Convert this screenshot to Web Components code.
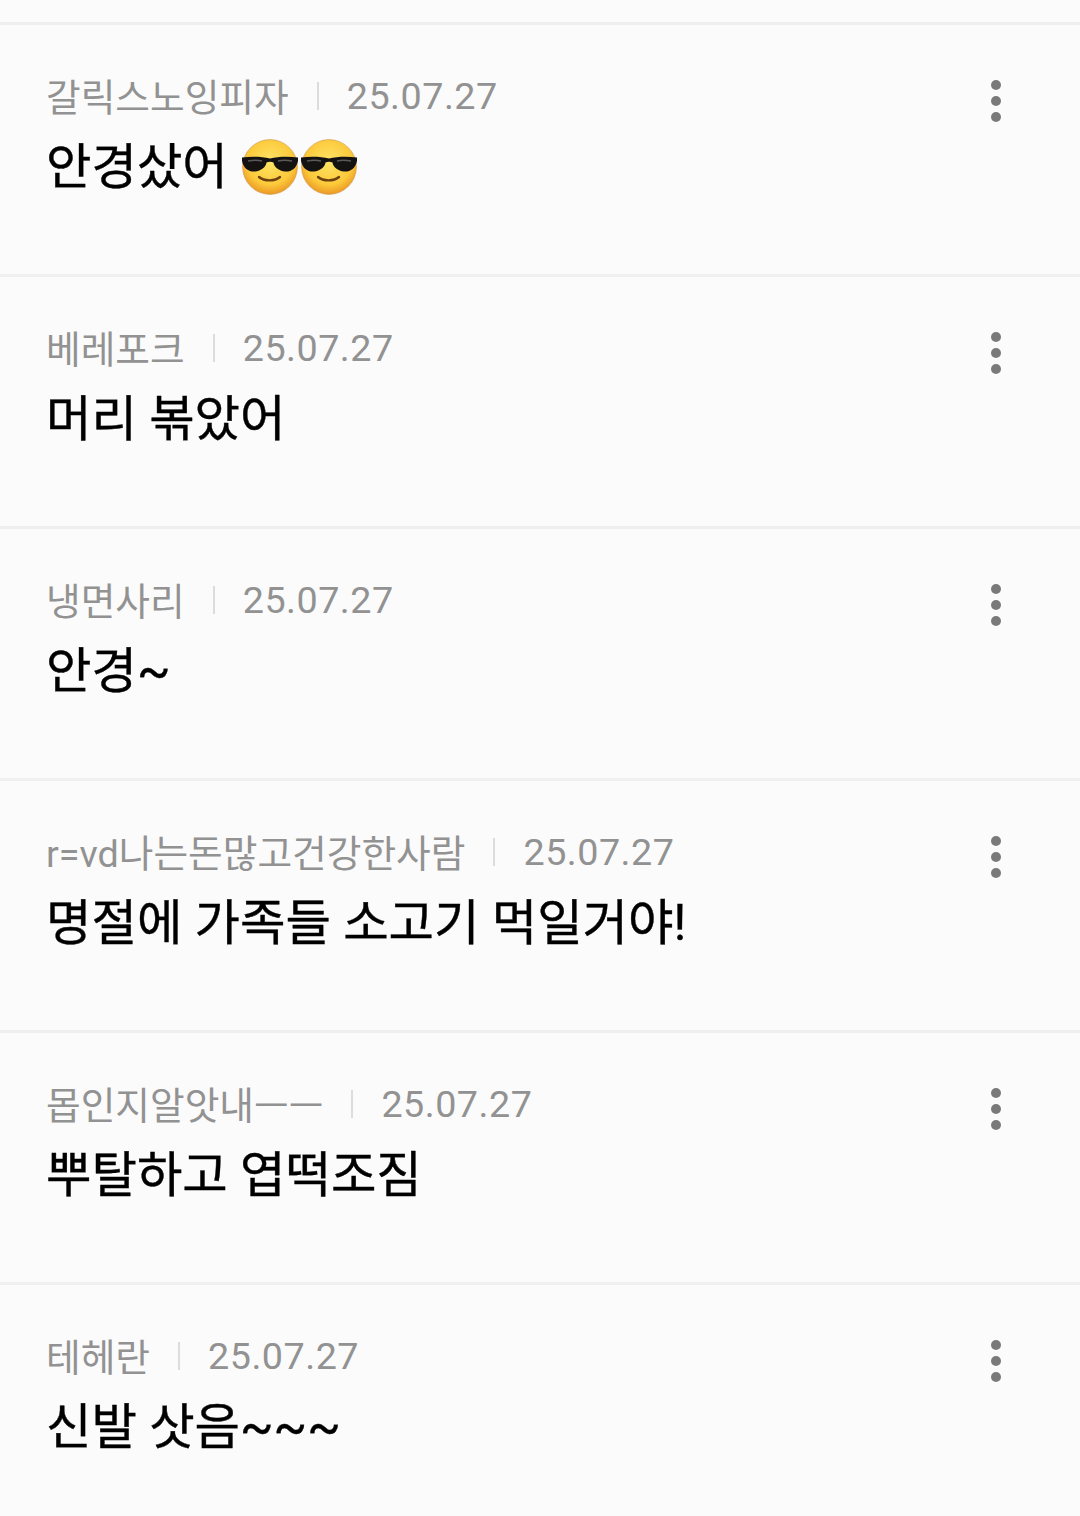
<!DOCTYPE html>
<html lang="ko">
<head>
<meta charset="utf-8">
<style>
  html, body { margin: 0; padding: 0; background: #fbfbfb; }
  body { font-family: Roboto, "Noto Sans CJK KR", sans-serif; }
</style>
</head>
<body>
<comment-list>
  <comment-row name="갈릭스노잉피자" date="25.07.27" text="안경샀어" emoji="2"></comment-row>
  <comment-row name="베레포크" date="25.07.27" text="머리 볶았어"></comment-row>
  <comment-row name="냉면사리" date="25.07.27" text="안경~"></comment-row>
  <comment-row name="r=vd나는돈많고건강한사람" date="25.07.27" text="명절에 가족들 소고기 먹일거야!"></comment-row>
  <comment-row name="몹인지알앗내ㅡㅡ" date="25.07.27" text="뿌탈하고 엽떡조짐"></comment-row>
  <comment-row name="테헤란" date="25.07.27" text="신발 삿음~~~"></comment-row>
</comment-list>
<script>
const coolFace = (id) => `
  <svg class="face" width="56" height="56" viewBox="0 0 56 56">
    <defs>
      <radialGradient id="${id}" cx="50%" cy="40%" r="62%">
        <stop offset="0" stop-color="#fee566"/>
        <stop offset="0.68" stop-color="#fcc93b"/>
        <stop offset="1" stop-color="#e99322"/>
      </radialGradient>
    </defs>
    <circle cx="28" cy="28" r="27.4" fill="url(#${id})" stroke="#c9964a" stroke-width="0.6"/>
    <path d="M0 18.5 C9 17.5 20 17.5 28 19.5 C36 17.5 47 17.5 56 18.5 L56 22 C54.5 29.5 49 33 43 32.5 C37 32 32 28 31.5 23.5 C29.5 22.6 26.5 22.6 24.5 23.5 C24 28 19 32 13 32.5 C7 33 1.5 29.5 0 22 Z" fill="#151212"/>
    <path d="M6 22 C11 21 16 21 20 22" stroke="#5e5959" stroke-width="1.5" fill="none"/>
    <path d="M36 22 C40 21 45 21 50 22" stroke="#5e5959" stroke-width="1.5" fill="none"/>
    <path d="M17 38 C22 42.5 33 42.5 38 38" stroke="#6e4210" stroke-width="2.4" fill="none" stroke-linecap="round"/>
  </svg>
`;

class CommentList extends HTMLElement {
  constructor() {
    super();
    this.attachShadow({ mode: "open" });
    this.shadowRoot.innerHTML = `
      <style>
        :host {
          display: block;
          height: 1516px;
          overflow: hidden;
          padding-top: 22px;
          box-sizing: border-box;
          background: #fbfbfb;
        }
      </style>
      <slot></slot>
    `;
  }
}

class CommentRow extends HTMLElement {
  constructor() {
    super();
    this.attachShadow({ mode: "open" });
  }

  connectedCallback() {
    const name = this.getAttribute("name");
    const date = this.getAttribute("date");
    const text = this.getAttribute("text");
    const count = Number(this.getAttribute("emoji") || 0);
    let faces = "";
    for (let i = 0; i < count; i++) faces += coolFace("face" + i);
    this.shadowRoot.innerHTML = `
      <style>
        :host {
          display: block;
          height: 252px;
          box-sizing: border-box;
          border-top: 3px solid #efefef;
          padding: 49px 46px 0 46px;
          position: relative;
        }
        .meta {
          display: flex;
          align-items: center;
          height: 44px;
          font-size: 37.7px;
          color: #929292;
          white-space: nowrap;
        }
        .name { margin-bottom: 4px; }
        .date { letter-spacing: 0.5px; }
        .sep {
          width: 2px;
          height: 28px;
          background: #dcdcdc;
          margin: 0 28px;
        }
        .body {
          display: flex;
          align-items: center;
          margin-top: 12px;
          height: 64px;
          font-size: 49.4px;
          color: #000;
          -webkit-text-stroke: 0.4px #000;
          white-space: pre;
        }
        .faces {
          display: flex;
          gap: 3px;
          margin-left: 14px;
          margin-top: 10px;
        }
        .face { display: block; flex: none; }
        .more {
          position: absolute;
          top: 55px;
          right: 79px;
          display: flex;
          flex-direction: column;
          gap: 6px;
        }
        .more i {
          width: 10px;
          height: 10px;
          border-radius: 50%;
          background: #7a7a7a;
        }
      </style>
      <div class="meta"><span class="name">${name}</span><span class="sep"></span><span class="date">${date}</span></div>
      <div class="body"><span>${text}</span>${count ? `<span class="faces">${faces}</span>` : ""}</div>
      <div class="more"><i></i><i></i><i></i></div>
    `;
  }
}

customElements.define("comment-list", CommentList);
customElements.define("comment-row", CommentRow);
</script>
</body>
</html>
